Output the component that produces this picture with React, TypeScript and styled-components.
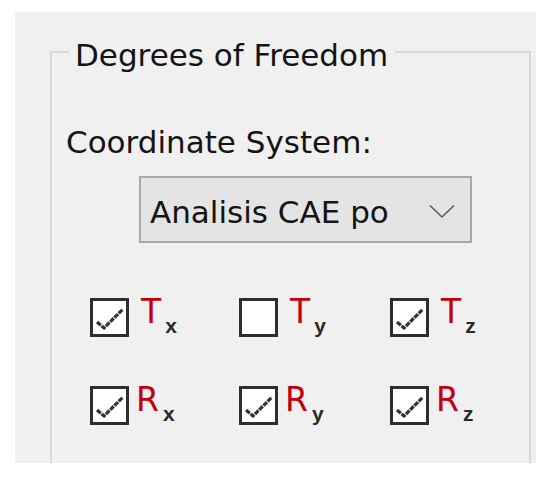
import React from 'react'
import styled, { createGlobalStyle } from 'styled-components'

const GlobalStyle = createGlobalStyle`
  html, body {
    margin: 0;
    padding: 0;
    background: #ffffff;
  }
  body {
    font-family: "DejaVu Sans", "Liberation Sans", sans-serif;
    color: #111;
  }
`

const Panel = styled.div`
  margin: 12px 0 0 15px;
  width: 521px;
  height: 451px;
  background: #f0f0f0;
  overflow: hidden;
`

const Group = styled.fieldset`
  margin: 19px 0 0 35px;
  padding: 0 0 0 14px;
  width: 481px;
  min-width: 0;
  min-height: 500px;
  box-sizing: border-box;
  border: 2px solid #d9d9d9;
  border-bottom: none;
`

const Legend = styled.legend`
  margin-left: 3px;
  padding: 6px 7px 0 6px;
  font-size: 31px;
  line-height: 36px;
  color: #141414;
`

const FieldLabel = styled.div`
  margin-top: 51px;
  font-size: 31px;
  line-height: 36px;
  color: #141414;
`

const Select = styled.div`
  margin: 16px 0 0 73px;
  width: 333px;
  height: 67px;
  box-sizing: border-box;
  border: 2px solid #a9a9a9;
  background: #e4e4e4;
  display: flex;
  align-items: center;
  padding: 4px 15px 0 9px;
  font-size: 31px;
  line-height: 36px;
  color: #141414;
`

const SelectText = styled.span`
  flex: 1;
  white-space: nowrap;
  overflow: hidden;
`

const Grid = styled.div`
  margin: 55px 0 0 24px;
  display: grid;
  grid-template-columns: 149px 151px auto;
  row-gap: 47px;
`

const Item = styled.div`
  display: flex;
  align-items: flex-start;
  gap: 11px;
`

const Box = styled.div`
  width: 39px;
  height: 39px;
  box-sizing: border-box;
  border: 3px solid #2e2e2e;
  background: #ffffff;
  display: flex;
  align-items: center;
  justify-content: center;
`

const Symbol = styled.span<{ $shift: number }>`
  margin-left: ${(p) => p.$shift}px;
  font-size: 33px;
  line-height: 27px;
  color: #c4000c;
  white-space: nowrap;
`

const Sub = styled.span`
  font-family: "Liberation Sans", Arial, sans-serif;
  font-weight: bold;
  font-size: 21px;
  color: #2a2a2a;
  margin-left: 4px;
  vertical-align: -10px;
`

const Check = () => (
  <svg width="33" height="33" viewBox="0 0 33 33">
    <polyline
      points="4,21 11,27 30,8"
      fill="none"
      stroke="#333333"
      strokeWidth="3.2"
      strokeLinejoin="round"
      strokeDasharray="5 1"
    />
  </svg>
)

const Chevron = () => (
  <svg width="26" height="15" viewBox="0 0 26 15">
    <polyline points="1,1.5 13,13 25,1.5" fill="none" stroke="#5a5a5a" strokeWidth="1.6" />
  </svg>
)

const dofs = [
  { sym: 'T', sub: 'x', on: true },
  { sym: 'T', sub: 'y', on: false },
  { sym: 'T', sub: 'z', on: true },
  { sym: 'R', sub: 'x', on: true },
  { sym: 'R', sub: 'y', on: true },
  { sym: 'R', sub: 'z', on: true },
]

export default function App() {
  return (
    <>
      <GlobalStyle />
      <Panel>
        <Group>
          <Legend>Degrees of Freedom</Legend>
          <FieldLabel>Coordinate System:</FieldLabel>
          <Select>
            <SelectText>Analisis CAE po</SelectText>
            <Chevron />
          </Select>
          <Grid>
            {dofs.map((d, i) => (
              <Item key={i}>
                <Box>{d.on && <Check />}</Box>
                <Symbol $shift={d.sym === 'R' ? -4 : 1}>
                  {d.sym}
                  <Sub>{d.sub}</Sub>
                </Symbol>
              </Item>
            ))}
          </Grid>
        </Group>
      </Panel>
    </>
  )
}
